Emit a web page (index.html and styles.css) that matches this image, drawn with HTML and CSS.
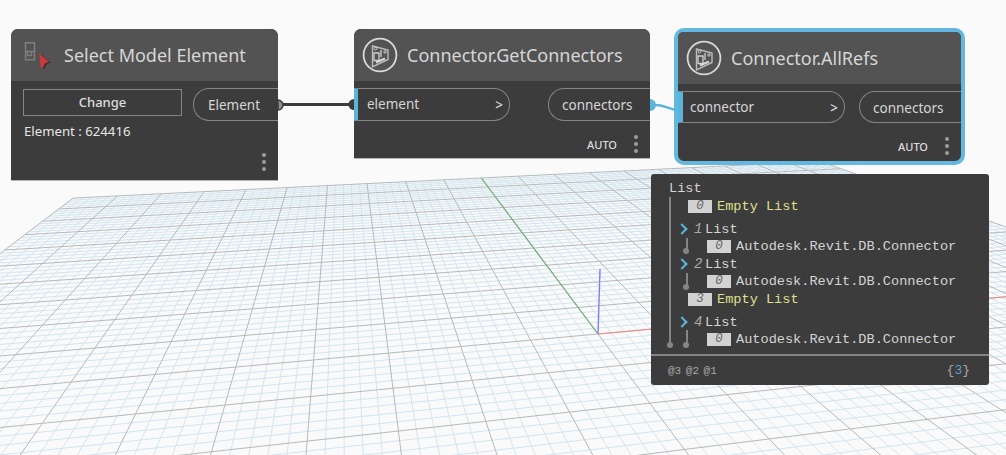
FILE: index.html
```html
<!DOCTYPE html>
<html lang="en">
<head>
  <meta charset="UTF-8">
  <title>Connector.AllRefs</title>
  <link rel="stylesheet" href="styles.css">
</head>
<body>

  <div class="canvas">
    <svg id="grid" class="layer" width="1006" height="455"></svg>

    <div class="node node-select">
      <div class="node-header">
        <svg class="select-icon" width="28" height="30" viewBox="0 0 28 30">
          <path d="M1.5 1.8h9v17h-9zM1.5 10.500h9M3.500 10.500h4v4h-4z" fill="none" stroke="#7e7e7e" stroke-width="1.5"/>
          <path d="M16.800 13l10 8.500-4 1.600-2.600 5-2.400-1.600z" fill="#2e2e2e"/>
          <path d="M15.300 12.300l10 8.400-4 1.600-2.600 5-2.400-1.600z" fill="#c8383c"/>
        </svg>
        <span class="node-title">Select Model Element</span>
      </div>
      <div class="select-row">
        <div class="select-left">
          <div class="change-btn">Change</div>
          <div class="element-id">Element : 624416</div>
        </div>
        <div class="port port-out port-element">Element</div>
      </div>
      <div class="node-footer footer-select">
        <div class="dots"><i></i><i></i><i></i></div>
      </div>
    </div>

    <div class="node node-get">
      <div class="node-header">
        <svg class="node-icon" width="36" height="36" viewBox="0 0 36 36">
          <use href="#connector-icon"/>
        </svg>
        <span class="node-title">Connector.GetConnectors</span>
      </div>
      <div class="port-row">
        <div class="port port-in port-in-get">element<b>&gt;</b></div>
        <div class="port port-out">connectors</div>
      </div>
      <div class="node-footer">
        <span class="auto">AUTO</span>
        <div class="dots"><i></i><i></i><i></i></div>
      </div>
    </div>

    <div class="node node-refs">
      <div class="node-header">
        <svg class="node-icon" width="36" height="36" viewBox="0 0 36 36">
          <use href="#connector-icon"/>
        </svg>
        <span class="node-title">Connector.AllRefs</span>
      </div>
      <div class="port-row">
        <div class="port port-in port-in-refs">connector<b>&gt;</b></div>
        <div class="port port-out">connectors</div>
      </div>
      <div class="node-footer">
        <span class="auto">AUTO</span>
        <div class="dots"><i></i><i></i><i></i></div>
      </div>
    </div>

    <svg class="layer" width="1006" height="455">
      <defs>
        <g id="connector-icon" fill="none">
          <circle cx="18" cy="18" r="16.4" stroke="#d8d8d8" stroke-width="1.8"/>
          <path d="M10.5 9l15.5 4v9.500l-15.500 7.500z" stroke="#bdbdbd" stroke-width="1.4"/>
          <path d="M12 16h5v7.500h-5zM19 13v7" stroke="#d0d0d0" stroke-width="1.3"/>
          <path d="M14 25.500l9-4" stroke="#d8d8d8" stroke-width="2.2"/>
          <circle cx="13.5" cy="11.500" r="1.4" stroke="#d0d0d0"/>
          <circle cx="23" cy="15" r="1.2" stroke="#d0d0d0"/>
        </g>
      </defs>
      <path d="M283 104.500H352" stroke="#3c3c3c" stroke-width="3.2"/>
      <path d="M278 100a5 5 0 0 1 0 10z" fill="#8f8f8f" stroke="#3c3c3c" stroke-width="1.5"/>
      <path d="M354 99a5 5 0 0 0 0 11z" fill="#3c3c3c"/>
      <path d="M654 105C662 104 666 108 676 110" fill="none" stroke="#5cb4dc" stroke-width="2.5"/>
      <path d="M650 99a6 6 0 0 1 0 12z" fill="#5cb4dc"/>
    </svg>

    <div class="preview">
      <div class="preview-body">
        <span class="guide guide-root"></span>
        <span class="guide guide-1"></span>
        <span class="guide guide-2"></span>
        <span class="guide guide-4"></span>

        <div class="row">List</div>
        <div class="row level-1"><span class="idx">0</span><span class="empty">Empty List</span></div>

        <div class="row level-list gap-top"><span class="chev"></span><span class="num">1</span>List</div>
        <div class="row item level-2"><span class="idx">0</span>Autodesk.Revit.DB.Connector</div>
        <div class="row level-list"><span class="chev"></span><span class="num">2</span>List</div>
        <div class="row item level-2"><span class="idx">0</span>Autodesk.Revit.DB.Connector</div>

        <div class="row level-1"><span class="idx">3</span><span class="empty">Empty List</span></div>

        <div class="row level-list gap-top"><span class="chev"></span><span class="num">4</span>List</div>
        <div class="row item level-2"><span class="idx">0</span>Autodesk.Revit.DB.Connector</div>
      </div>
      <div class="preview-footer">
        <span class="levels">@3 @2 @1</span>
        <span class="count">{<em>3</em>}</span>
      </div>
    </div>
  </div>

  <script src="grid.js"></script>
</body>
</html>
```

FILE: styles.css
```css
html, body {
  margin: 0;
  padding: 0;
}

body {
  background-color: #fafafa;
  font-family: "Noto Sans", "Open Sans", sans-serif;
  overflow: hidden;
}

.canvas {
  position: relative;
  width: 1006px;
  height: 455px;
  overflow: hidden;
}

.layer {
  position: absolute;
  left: 0;
  top: 0;
}

/* nodes sit on a free canvas */
.node {
  position: absolute;
  box-sizing: border-box;
  background-color: #3c3c3c;
  border-bottom: 1px solid #b5b5b5;
  border-radius: 7px 7px 0 0;
  color: #dcdcdc;
}

.node-select {
  left: 11px;
  top: 29px;
  width: 267px;
  height: 152px;
}

.node-get {
  left: 354px;
  top: 29px;
  width: 296px;
  height: 130px;
}

.node-refs {
  left: 674px;
  top: 28px;
  width: 291px;
  height: 137px;
  border: 4px solid #64b8e0;
  border-radius: 10px;
}

.node-header {
  display: flex;
  align-items: center;
  height: 52px;
  background-color: #535353;
  border-radius: 7px 7px 0 0;
}

.node-refs .node-header {
  border-radius: 5px 5px 0 0;
}

.node-title {
  font-size: 18px;
  color: #d6d6d6;
}

.select-icon {
  margin: 2px 0 0 13px;
}

.node-select .node-title {
  margin-left: 12px;
}

.node-icon {
  margin-left: 8px;
  margin-right: 9px;
}

.select-row {
  display: flex;
  justify-content: space-between;
  margin-top: 7px;
}

.select-left {
  margin: 1px 0 0 12px;
}

.change-btn {
  box-sizing: border-box;
  width: 159px;
  height: 27px;
  line-height: 24px;
  border: 1px solid #858585;
  text-align: center;
  font-size: 13px;
  font-weight: 500;
}

.element-id {
  margin: 6px 0 0 1px;
  font-size: 13.2px;
  line-height: 18px;
  color: #e6e6e6;
}

.port-row {
  display: flex;
  justify-content: space-between;
  margin-top: 7px;
}

.port {
  box-sizing: border-box;
  height: 33px;
  line-height: 33px;
  border: 1px solid #858585;
  font-size: 13.5px;
  color: #d6d6d6;
}

.port-out {
  width: 102px;
  padding-left: 13px;
  border-right: 0;
  border-radius: 16px 0 0 16px;
}

.port-element {
  width: 85px;
  padding-left: 14px;
}

.port-in {
  position: relative;
  padding-left: 9px;
  border-left: 4px solid #5cb4dc;
  border-radius: 0 16px 16px 0;
  line-height: 31px;
}

.port-in b {
  position: absolute;
  right: 6px;
  top: 1px;
  font-weight: 500;
}

.port-in-get {
  width: 156px;
}

.port-in-refs {
  width: 167px;
  height: 32px;
  border-left-width: 5px;
  padding-left: 7px;
}

.node-refs .port-out {
  height: 32px;
}

.node-footer {
  display: flex;
  justify-content: flex-end;
  align-items: center;
  gap: 17px;
  height: 16px;
  margin-top: 15px;
  padding-right: 12px;
}

.footer-select {
  margin-top: 14px;
}

.auto {
  font-size: 11px;
  font-weight: 500;
  color: #dcdcdc;
}

.dots {
  display: flex;
  flex-direction: column;
  gap: 3px;
}

.dots i {
  display: block;
  width: 4px;
  height: 4px;
  border-radius: 50%;
  background-color: #9c9c9c;
}

/* watch preview under the last node */
.preview {
  position: absolute;
  left: 651px;
  top: 174px;
  width: 338px;
  height: 211px;
  background-color: #3c3c3c;
  border-radius: 3px;
  font-family: "Liberation Mono", "DejaVu Sans Mono", monospace;
  font-size: 13.6px;
  color: #d4d4d4;
}

.preview-body {
  position: relative;
  box-sizing: border-box;
  height: 182px;
  padding: 5px 0 0 18px;
  border-bottom: 2px solid #858585;
}

.row {
  display: flex;
  align-items: center;
  height: 18px;
}

.row.item {
  height: 17px;
}

.gap-top {
  margin-top: 5px;
}

.level-1 {
  padding-left: 19px;
}

.level-list {
  padding-left: 12px;
}

.level-2 {
  padding-left: 38px;
}

.idx {
  width: 24px;
  height: 13px;
  line-height: 13px;
  margin-right: 5px;
  background-color: #d2d2d2;
  color: #666;
  text-align: center;
  font-style: italic;
  font-size: 12.5px;
}

.empty {
  color: #dfe08c;
}

.chev {
  box-sizing: border-box;
  width: 8px;
  height: 8px;
  margin: 0 8px 0 -3px;
  border-top: 2.5px solid #5cb4dc;
  border-right: 2.5px solid #5cb4dc;
  transform: rotate(45deg);
}

.num {
  width: 11px;
  font-style: italic;
  font-size: 14px;
  color: #a8a8a8;
}

.guide {
  position: absolute;
  width: 1.5px;
  background-color: #858585;
}

.guide::after {
  content: "";
  position: absolute;
  left: -3.5px;
  bottom: -3px;
  width: 6px;
  height: 6px;
  border-radius: 50%;
  background-color: #858585;
}

.guide-root {
  left: 17.5px;
  top: 23px;
  height: 148px;
  width: 2px;
}

.guide-root::after {
  left: -2px;
}

.guide-1 {
  left: 35px;
  top: 64px;
  height: 13px;
}

.guide-2 {
  left: 35px;
  top: 99px;
  height: 14px;
}

.guide-4 {
  left: 35px;
  top: 156px;
  height: 15px;
}

.preview-footer {
  display: flex;
  justify-content: space-between;
  align-items: center;
  height: 29px;
  padding: 0 19px 0 17px;
}

.levels {
  font-size: 11px;
  word-spacing: -2px;
  color: #a8a8a8;
}

.count {
  font-size: 13px;
  color: #a8a8a8;
}

.count em {
  font-style: normal;
  color: #5c9cc8;
}
```

FILE: grid.js
```js
// floor grid, projected with a homography fitted to the reference
const svg = document.getElementById('grid');
const NS = 'http://www.w3.org/2000/svg';

function project(x, y) {
  const w = 0.172 * x + 0.843 * y + 1;
  return [(765 * x + 289 * y + 598) / w, (-3 * x - 5.9 * y + 334) / w];
}

function line(a, b, color, width) {
  const el = document.createElementNS(NS, 'line');
  el.setAttribute('x1', a[0].toFixed(1));
  el.setAttribute('y1', a[1].toFixed(1));
  el.setAttribute('x2', b[0].toFixed(1));
  el.setAttribute('y2', b[1].toFixed(1));
  el.setAttribute('stroke', color);
  el.setAttribute('stroke-width', width);
  svg.appendChild(el);
}

for (const major of [false, true]) {
  for (let i = -50; i <= 50; i++) {
    if ((i % 5 === 0) !== major) continue;
    const v = i / 50;
    const color = major ? '#b3babd' : '#d3e5ef';
    // clamp the near end so it stays in front of the camera
    line(project(v, Math.max(-1, (0.08 - 1 - 0.172 * v) / 0.843)), project(v, 1), color, 1);
    line(project(Math.max(-1, (0.08 - 1 - 0.843 * v) / 0.172), v), project(1, v), color, 1);
  }
}

line(project(0, 0), project(0, 1), '#74ae78', 1.2);
line(project(0, 0), project(1, 0), '#f08a8a', 1.2);
line([598, 334], [600, 269], '#7f7ff0', 1.4);
```
